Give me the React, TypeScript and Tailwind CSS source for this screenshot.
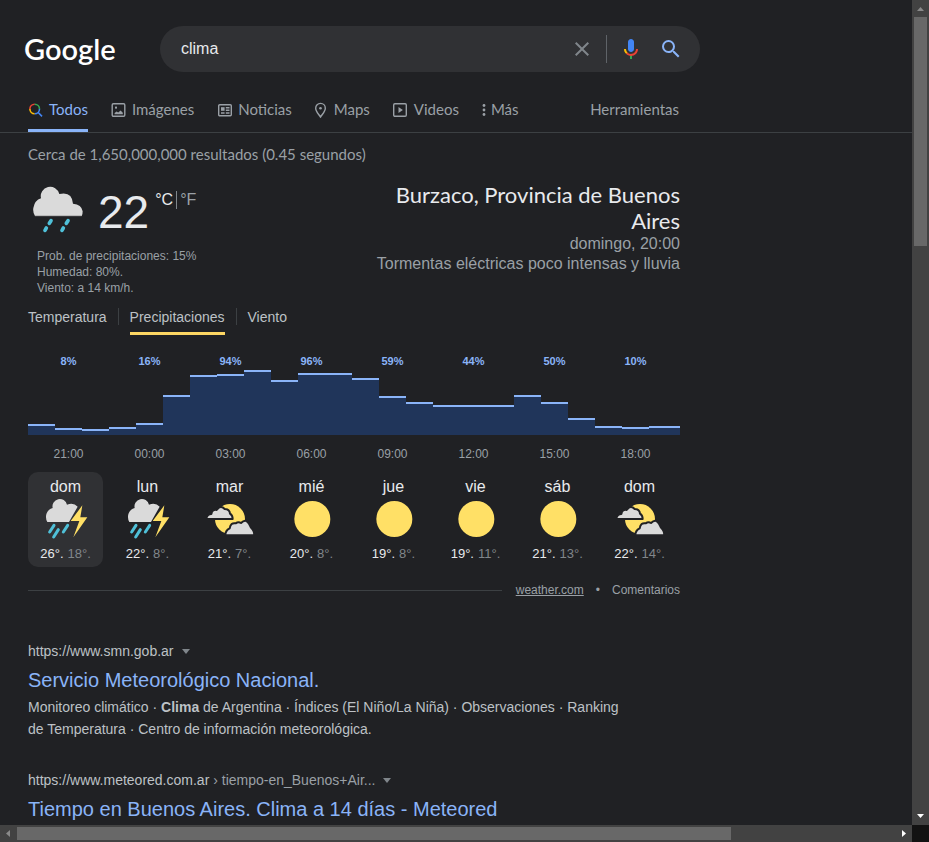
import React from "react";

type Kind = "storm" | "partly" | "sun";

const bars = [11, 7, 6, 8, 12, 40, 60, 61, 65, 55, 62, 62, 57, 39, 33, 30, 30, 30, 40, 33, 17, 9, 8, 9];

const hours = [
  { time: "21:00", rain: "8%" },
  { time: "00:00", rain: "16%" },
  { time: "03:00", rain: "94%" },
  { time: "06:00", rain: "96%" },
  { time: "09:00", rain: "59%" },
  { time: "12:00", rain: "44%" },
  { time: "15:00", rain: "50%" },
  { time: "18:00", rain: "10%" },
];

const days: { name: string; kind: Kind; high: string; low: string }[] = [
  { name: "dom", kind: "storm", high: "26°.", low: "18°." },
  { name: "lun", kind: "storm", high: "22°.", low: "8°." },
  { name: "mar", kind: "partly", high: "21°.", low: "7°." },
  { name: "mié", kind: "sun", high: "20°.", low: "8°." },
  { name: "jue", kind: "sun", high: "19°.", low: "8°." },
  { name: "vie", kind: "sun", high: "19°.", low: "11°." },
  { name: "sáb", kind: "sun", high: "21°.", low: "13°." },
  { name: "dom", kind: "partly", high: "22°.", low: "14°." },
];

function RainIcon() {
  return (
    <svg className="h-12 w-[54px]" viewBox="93 169 162 144" aria-hidden="true">
      <path
        d="M105 259Q98 250 100 235Q104 212 123 206A28 28 0 0 1 178 193Q216 184 219 222Q245 224 248 245Q248 255 245 259Z"
        fill="#dadada"
      />
      <path d="M105 258H245" stroke="#b4b4b4" strokeWidth="3" />
      <g stroke="#4fc0d8" strokeWidth="11" strokeLinecap="round">
        <path d="M153 273L148 281M139 295L135 302M204 273L199 281M190 295L186 302" />
      </g>
    </svg>
  );
}

function DayIcon({ kind }: { kind: Kind }) {
  if (kind === "sun") {
    return (
      <svg className="h-[42px] w-12" viewBox="0 0 144 126" aria-hidden="true">
        <circle cx="73" cy="63" r="54" fill="#ffe066" />
      </svg>
    );
  }
  if (kind === "storm") {
    return (
      <svg className="h-[42px] w-12" viewBox="66 99 144 126" aria-hidden="true">
        <path d="M82 171Q75 158 80 145Q86 132 98 129A22 22 0 0 1 141 119Q161 112 173 125L147 171Z" fill="#dadada" />
        <path d="M187 121L152 168H178L160 217L202 157H181Z" fill="#ffe066" />
        <g stroke="#4fc0d8" strokeWidth="9" strokeLinecap="round">
          <path d="M102 181L89 201M115 194L101 216M143 181L130 201" />
        </g>
      </svg>
    );
  }
  return (
    <svg className="h-[42px] w-12" viewBox="558 99 144 126" aria-hidden="true">
      <circle cx="630" cy="162" r="45" fill="#ffe066" />
      <g fill="#dadada" stroke="#202124" strokeWidth="6" strokeLinejoin="round">
        <path d="M558 162Q562 147 574 147Q577 132 590 135Q602 119 614 132Q629 132 630 146Q638 151 638 162Z" />
        <path d="M616 211Q616 196 629 190Q632 172 647 175Q655 169 663 174Q678 158 688 178Q692 188 698 194Q704 202 702 211Z" />
      </g>
    </svg>
  );
}

function AllIcon() {
  return (
    <svg className="size-4" viewBox="0 0 16 16" fill="none" strokeWidth="1.6" aria-hidden="true">
      <path d="M1.900 7A4.800 4.800 0 0 1 6.700 2.200" stroke="#ea4335" />
      <path d="M6.700 2.200A4.800 4.800 0 0 1 11.500 7" stroke="#34a853" />
      <path d="M1.900 7A4.800 4.800 0 0 0 6.700 11.800" stroke="#fbbc04" />
      <path d="M11.500 7A4.800 4.800 0 0 1 6.700 11.800M10 10.300L14 14.400" stroke="#4285f4" />
    </svg>
  );
}

function ImageIcon() {
  return (
    <svg className="size-4" viewBox="0 0 16 16" fill="none" stroke="#9aa0a6" strokeWidth="1.4" aria-hidden="true">
      <rect x="1.2" y="1.7" width="12.6" height="12.6" rx="1.2" />
      <rect x="4" y="4.6" width="2" height="2" fill="#9aa0a6" stroke="none" />
      <path d="M3.6 12.2V11l2-1.4 1.6 1 2.4-2.2 2.2 2.4v1.4z" fill="#9aa0a6" stroke="none" />
    </svg>
  );
}

function NewsIcon() {
  return (
    <svg className="size-4" viewBox="0 0 16 16" fill="none" stroke="#9aa0a6" strokeWidth="1.4" aria-hidden="true">
      <rect x="1.7" y="2.7" width="12.6" height="11" rx="1" />
      <rect x="4" y="5.2" width="3.600" height="3.600" fill="#9aa0a6" stroke="none" />
      <path d="M8.800 5.800H12.500M8.800 8.200H12.500M4 11H7.600M8.800 11H12.500" />
    </svg>
  );
}

function PinIcon() {
  return (
    <svg className="h-4 w-[14px]" viewBox="2 0 14 16" fill="none" stroke="#9aa0a6" strokeWidth="1.400" aria-hidden="true">
      <path d="M7.500 15C5.500 12 2.700 9.400 2.700 6.200a4.800 4.800 0 0 1 9.600 0C12.300 9.400 9.500 12 7.500 15z" />
      <circle cx="7.500" cy="6.200" r="1.300" fill="#9aa0a6" stroke="none" />
    </svg>
  );
}

function VideoIcon() {
  return (
    <svg className="size-4" viewBox="0 0 16 16" fill="none" stroke="#9aa0a6" strokeWidth="1.400" aria-hidden="true">
      <rect x="0.700" y="1.700" width="12.600" height="12.600" rx="1.200" />
      <path d="M5.500 5l4.400 3-4.400 3z" fill="#9aa0a6" stroke="none" />
    </svg>
  );
}

function MoreIcon() {
  return (
    <svg className="h-4 w-1" viewBox="0 0 4 16" fill="#9aa0a6" aria-hidden="true">
      <circle cx="2" cy="3.500" r="1.400" />
      <circle cx="2" cy="8" r="1.400" />
      <circle cx="2" cy="12.500" r="1.400" />
    </svg>
  );
}

function Tab({ icon, label, active }: { icon: React.ReactNode; label: string; active?: boolean }) {
  return (
    <a
      href="#"
      className={
        active
          ? "flex h-[42px] items-center gap-[5px] border-b-3 border-[#8ab4f8] text-[#8ab4f8]"
          : "flex h-[42px] items-center gap-[5px] border-b-3 border-transparent"
      }
    >
      {icon}
      {label}
    </a>
  );
}

function Caret() {
  return (
    <button type="button" aria-label="Acerca de este resultado" className="ml-2 inline-flex">
      <svg className="h-[5px] w-2" viewBox="0 0 8 5" aria-hidden="true">
        <path d="M0 0H8L4 5Z" fill="#80868b" />
      </svg>
    </button>
  );
}

function Arrow({ d, fill, label }: { d: string; fill: string; label: string }) {
  return (
    <button type="button" aria-label={label} className="flex size-[17px] shrink-0 items-center justify-center">
      <svg className="size-[17px]" viewBox="0 0 17 17" aria-hidden="true">
        <path d={d} fill={fill} />
      </svg>
    </button>
  );
}

export default function App() {
  return (
    <div className="flex h-screen flex-col bg-[#202124] font-['Liberation_Sans',Arial,sans-serif] text-[#bdc1c6]">
      <div className="flex min-h-0 flex-1">
        <div className="min-w-0 flex-1 overflow-hidden">
          <header className="flex items-center pt-[26px] pl-6">
            <a
              href="#"
              className="w-[136px] shrink-0 font-['Lato',sans-serif] text-[29px] leading-[46px] font-semibold text-white"
            >
              Google
            </a>
            <form
              className="flex h-[46px] max-w-[540px] min-w-0 flex-1 items-center rounded-full bg-[#303134] pr-[17px] pl-[21px]"
              onSubmit={(e) => e.preventDefault()}
            >
              <input
                type="text"
                aria-label="Buscar"
                defaultValue="clima"
                className="min-w-0 flex-1 bg-transparent text-base text-[#e8eaed] outline-none"
              />
              <button type="button" aria-label="Borrar">
                <svg className="size-6" viewBox="0 0 24 24" fill="#80868b" aria-hidden="true">
                  <path d="M19 6.41L17.59 5 12 10.59 6.41 5 5 6.41 10.59 12 5 17.59 6.41 19 12 13.41 17.59 19 19 17.59 13.41 12z" />
                </svg>
              </button>
              <span className="mx-3 h-7 w-px bg-[#5f6368]" />
              <button type="button" aria-label="Buscar por voz">
                <svg className="size-6" viewBox="0 0 24 24" aria-hidden="true">
                  <path fill="#4285f4" d="m12 15c1.66 0 3-1.31 3-2.97v-7.02c0-1.66-1.34-3.01-3-3.01s-3 1.34-3 3.01v7.02c0 1.66 1.34 2.97 3 2.97z" />
                  <path fill="#34a853" d="m11 18.080h2v3.920h-2z" />
                  <path fill="#fbbc04" d="m7.050 16.870c-1.270-1.330-2.050-2.830-2.050-4.870h2c0 1.450 0.560 2.420 1.470 3.380v0.320l-1.150 1.180z" />
                  <path fill="#ea4335" d="m12 16.930a4.970 5.250 0 0 1-3.540-1.550l-1.410 1.490c1.260 1.340 3.020 2.130 4.950 2.130 3.870 0 6.990-2.920 6.990-7h-1.990c0 2.920-2.240 4.930-5 4.930z" />
                </svg>
              </button>
              <button type="submit" aria-label="Buscar" className="ml-4">
                <svg className="size-6" viewBox="0 0 24 24" fill="#8ab4f8" aria-hidden="true">
                  <path d="M15.500 14h-.790l-.280-.270A6.471 6.471 0 0 0 16 9.500 6.500 6.500 0 1 0 9.500 16c1.610 0 3.090-.590 4.230-1.570l.270.280v.790l5 4.990L20.490 19l-4.990-5zm-6 0C7.010 14 5 11.990 5 9.500S7.010 5 9.500 5 14 7.010 14 9.500 11.990 14 9.500 14z" />
                </svg>
              </button>
            </form>
          </header>

          <nav className="mt-[18px] border-b border-[#3c4043] pl-7 font-['Lato',sans-serif] text-[15px] text-[#9aa0a6]">
            <div className="flex max-w-[651px] justify-between">
              <div className="flex gap-[23px]">
                <Tab icon={<AllIcon />} label="Todos" active />
                <Tab icon={<ImageIcon />} label="Imágenes" />
                <Tab icon={<NewsIcon />} label="Noticias" />
                <Tab icon={<PinIcon />} label="Maps" />
                <Tab icon={<VideoIcon />} label="Videos" />
                <Tab icon={<MoreIcon />} label="Más" />
              </div>
              <button type="button" className="h-[42px] border-b-3 border-transparent">
                Herramientas
              </button>
            </div>
          </nav>

          <main className="max-w-[680px] pl-7">
            <p className="mt-[11px] font-['Lato',sans-serif] text-[15px] leading-5 text-[#9aa0a6]">
              Cerca de 1,650,000,000 resultados (0.45 segundos)
            </p>

            <section className="mt-[18px]" aria-label="Clima">
              <div className="flex justify-between">
                <div className="pt-1">
                  <div className="flex h-[62px] items-start pl-[3px]">
                    <RainIcon />
                    <span className="ml-[13px] text-[46px] leading-[52px] text-[#e8eaed]">22</span>
                    <div className="mt-[5px] flex items-center pl-[6px] text-base leading-[18px] text-[#9aa0a6]">
                      <span className="text-[#e8eaed]">°C</span>
                      <span className="mx-[3px] h-[18px] w-px bg-[#80868b]" />
                      <a href="#">°F</a>
                    </div>
                  </div>
                  <div className="pl-[9px] text-xs leading-4 text-[#9aa0a6]">
                    <p>Prob. de precipitaciones: 15%</p>
                    <p>Humedad: 80%.</p>
                    <p>Viento: a 14 km/h.</p>
                  </div>
                </div>
                <div className="max-w-[320px] text-right text-base leading-5 text-[#9aa0a6]">
                  <h2 className="font-['Lato',sans-serif] text-[22px] leading-[26px] text-[#e8eaed]">
                    Burzaco, Provincia de Buenos Aires
                  </h2>
                  <p>domingo, 20:00</p>
                  <p>Tormentas eléctricas poco intensas y lluvia</p>
                </div>
              </div>

              <div className="mt-[6px] flex text-sm">
                <button type="button" className="h-[33px] border-b-3 border-transparent">
                  Temperatura
                </button>
                <span className="mx-[11px] mt-[6px] h-[17px] w-px bg-[#3c4043]" />
                <button type="button" className="h-[33px] border-b-3 border-[#fdd663]">
                  Precipitaciones
                </button>
                <span className="mx-[11px] mt-[6px] h-[17px] w-px bg-[#3c4043]" />
                <button type="button" className="h-[33px] border-b-3 border-transparent">
                  Viento
                </button>
              </div>

              <div className="mt-[18px] flex text-[11px] leading-[17px] font-bold text-[#8ab4f8]">
                {hours.map((h) => (
                  <span key={h.time} className="w-[81px] text-center">
                    {h.rain}
                  </span>
                ))}
              </div>
              <div className="flex h-[65px] items-end">
                {bars.map((h, i) => (
                  <div
                    key={i}
                    className="w-[27px] border-t-2 border-[#8ab4f8] bg-[#20355a] last:flex-1"
                    style={{ height: h }}
                  />
                ))}
              </div>
              <div className="mt-[11px] flex text-xs leading-4 text-[#9aa0a6]">
                {hours.map((h) => (
                  <span key={h.time} className="w-[81px] text-center">
                    {h.time}
                  </span>
                ))}
              </div>

              <div className="mt-[10px] flex gap-[7px]">
                {days.map((d, i) => (
                  <button
                    type="button"
                    key={i}
                    className={
                      i === 0
                        ? "flex w-[75px] flex-col items-center rounded-[10px] bg-[#303134] pt-[5px] pb-[5px]"
                        : "flex w-[75px] flex-col items-center pt-[5px] pb-[5px]"
                    }
                  >
                    <span className="mb-px text-base leading-5 text-[#e8eaed]">{d.name}</span>
                    <DayIcon kind={d.kind} />
                    <span className="mt-[6px] flex gap-1 text-[13px] leading-4">
                      <span className="text-[#e8eaed]">{d.high}</span>
                      <span className="text-[#80868b]">{d.low}</span>
                    </span>
                  </button>
                ))}
              </div>

              <div className="mt-[15px] flex items-center text-xs leading-4 text-[#9aa0a6]">
                <span className="mr-[14px] h-px flex-1 bg-[#3c4043]" />
                <a href="#" className="underline">
                  weather.com
                </a>
                <span className="mx-3">•</span>
                <a href="#">Comentarios</a>
              </div>
            </section>

            <article className="mt-[43px] max-w-[600px]">
              <div className="flex items-center text-sm leading-5">
                <cite className="not-italic">https://www.smn.gob.ar</cite>
                <Caret />
              </div>
              <h3 className="mt-[6px] text-xl leading-[26px] text-[#8ab4f8]">
                <a href="#">Servicio Meteorológico Nacional.</a>
              </h3>
              <p className="mt-[3px] text-sm leading-[22px]">
                Monitoreo climático · <b>Clima</b> de Argentina · Índices (El Niño/La Niña) · Observaciones · Ranking de
                Temperatura · Centro de información meteorológica.
              </p>
            </article>

            <article className="mt-[30px] max-w-[600px]">
              <div className="flex items-center text-sm leading-5">
                <cite className="not-italic">
                  https://www.meteored.com.ar <span className="text-[#9aa0a6]">› tiempo-en_Buenos+Air...</span>
                </cite>
                <Caret />
              </div>
              <h3 className="mt-[6px] text-xl leading-[26px] text-[#8ab4f8]">
                <a href="#">Tiempo en Buenos Aires. Clima a 14 días - Meteored</a>
              </h3>
            </article>
          </main>
        </div>

        <div className="flex w-[17px] shrink-0 flex-col bg-[#424242]">
          <Arrow d="M5 11H12L8.500 7Z" fill="#8a8a8a" label="Subir" />
          <div className="flex-1 px-[2px]">
            <div className="h-[29%] bg-[#686868]" />
          </div>
          <Arrow d="M5 6H12L8.500 10Z" fill="#ffffff" label="Bajar" />
        </div>
      </div>

      <div className="flex h-[17px] shrink-0">
        <div className="flex flex-1 bg-[#424242]">
          <Arrow d="M10 5V12L6 8.500Z" fill="#8a8a8a" label="Izquierda" />
          <div className="flex-1 py-[2px]">
            <div className="h-full w-[81.3%] bg-[#686868]" />
          </div>
          <Arrow d="M7 5V12L11 8.500Z" fill="#ffffff" label="Derecha" />
        </div>
        <div className="w-[17px] bg-[#121212]" />
      </div>
    </div>
  );
}
